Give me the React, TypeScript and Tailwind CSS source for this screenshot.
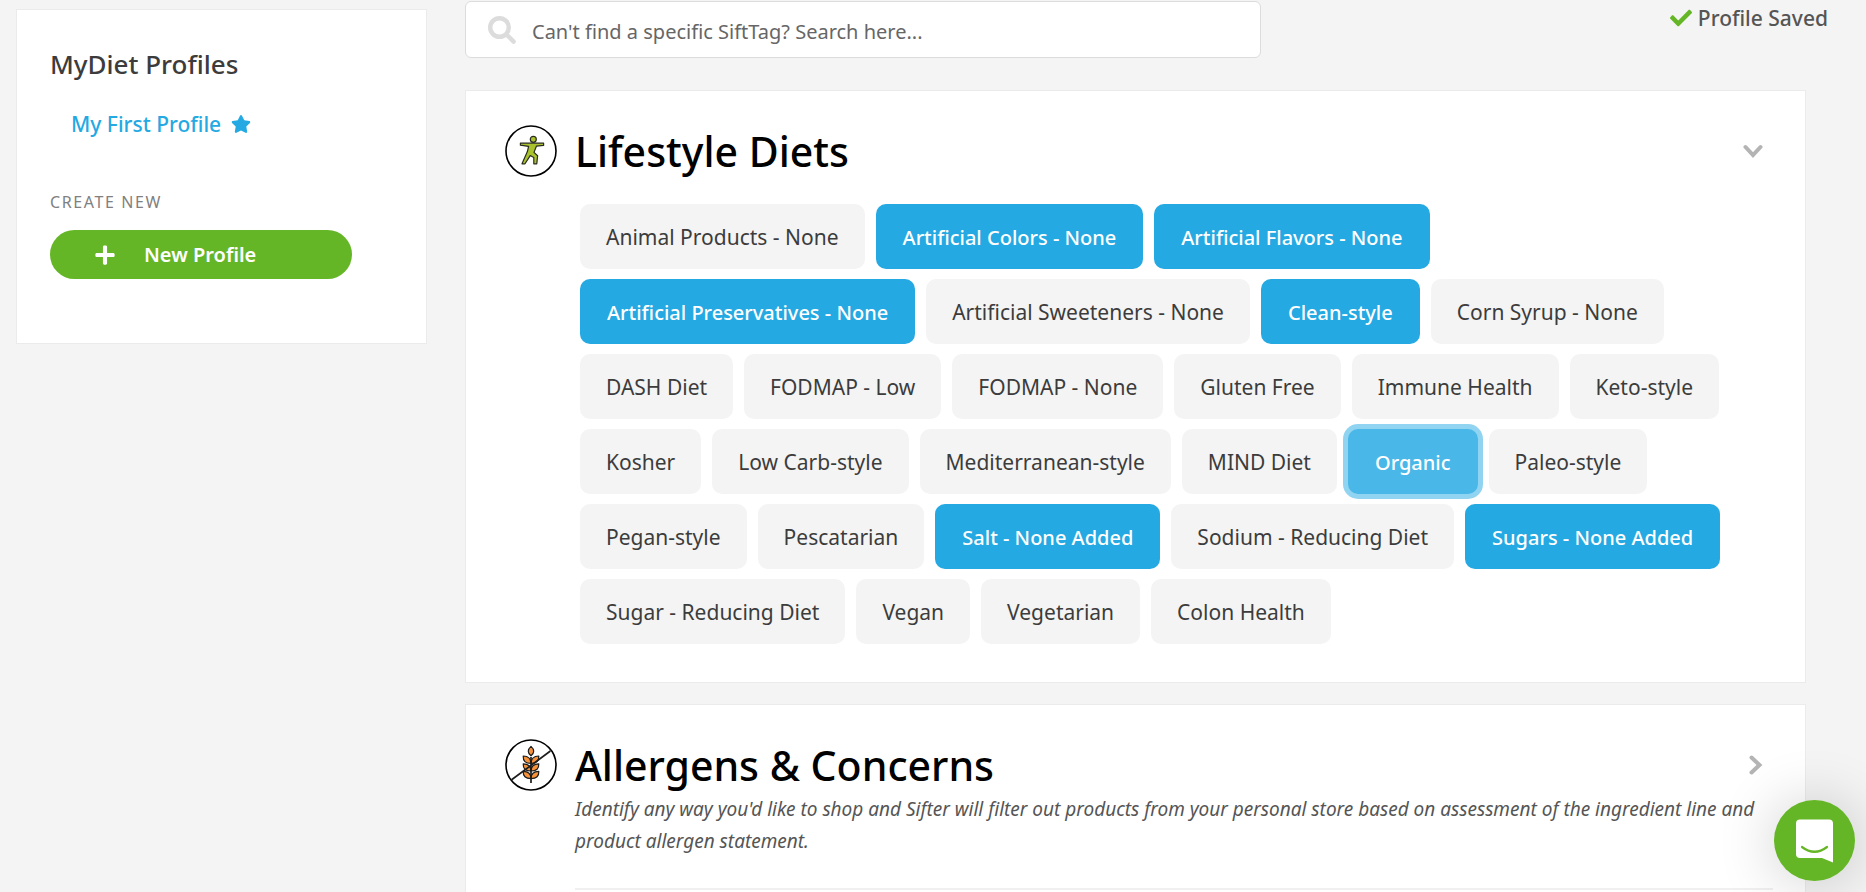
import { useState } from "react";
import clsx from "clsx";
import { FaCheck, FaPlus, FaStar } from "react-icons/fa";

interface Tag {
  name: string;
  selected?: boolean;
}

const lifestyleTags: Tag[] = [
  { name: "Animal Products - None" },
  { name: "Artificial Colors - None", selected: true },
  { name: "Artificial Flavors - None", selected: true },
  { name: "Artificial Preservatives - None", selected: true },
  { name: "Artificial Sweeteners - None" },
  { name: "Clean-style", selected: true },
  { name: "Corn Syrup - None" },
  { name: "DASH Diet" },
  { name: "FODMAP - Low" },
  { name: "FODMAP - None" },
  { name: "Gluten Free" },
  { name: "Immune Health" },
  { name: "Keto-style" },
  { name: "Kosher" },
  { name: "Low Carb-style" },
  { name: "Mediterranean-style" },
  { name: "MIND Diet" },
  { name: "Organic", selected: true },
  { name: "Paleo-style" },
  { name: "Pegan-style" },
  { name: "Pescatarian" },
  { name: "Salt - None Added", selected: true },
  { name: "Sodium - Reducing Diet" },
  { name: "Sugars - None Added", selected: true },
  { name: "Sugar - Reducing Diet" },
  { name: "Vegan" },
  { name: "Vegetarian" },
  { name: "Colon Health" },
];

const SearchIcon = () => (
  <svg viewBox="0 0 28 28" className="size-7 shrink-0" fill="none" stroke="#dcdcdc" aria-hidden="true">
    <circle cx="11.5" cy="11.5" r="9.3" strokeWidth="4.4" />
    <path d="M18.5 18.5 L25.6 25.6" strokeWidth="4.4" strokeLinecap="round" />
  </svg>
);

const LifestyleIcon = () => (
  <svg viewBox="0 0 52 52" className="size-[52px] shrink-0" aria-hidden="true">
    <circle cx="26" cy="26" r="25" fill="#fff" stroke="#000" strokeWidth="1.6" />
    <g fill="#a9c32f" stroke="#2b2b20" strokeWidth="1.2" strokeLinejoin="round">
      <path d="M15.4 18.2 H38.6 V20.4 L31.4 21.2 L29 27.4 L32.6 30.8 L31.8 38.8 H28.8 L28.8 32.6 L25.2 30.6 L20 38.8 H17 L22.4 26.6 L23.6 21.4 L15.4 20.2 Z" />
      <circle cx="28.3" cy="14.3" r="3" />
    </g>
  </svg>
);

const AllergenIcon = () => (
  <svg viewBox="0 0 52 52" className="size-[52px] shrink-0" aria-hidden="true">
    <circle cx="26" cy="26" r="25" fill="#fff" stroke="#000" strokeWidth="1.6" />
    <g fill="#f7923a" stroke="#1d1d1d" strokeWidth="1.2" strokeLinejoin="round">
      <path d="M26 7.4 C29.6 10.6 29.6 14 26 16.8 C22.4 14 22.4 10.6 26 7.4 Z" />
      <path d="M26 24.4 C20.4 24.4 18 22 18.2 17 C23.4 17.2 26 20 26 24.4 C26 20 28.6 17.2 33.8 17 C34 22 31.6 24.4 26 24.4 Z" />
      <path d="M26 32 C20.4 32 18 29.6 18.2 24.8 C23.4 25 26 27.6 26 32 C26 27.6 28.6 25 33.8 24.8 C34 29.6 31.6 32 26 32 Z" />
      <path d="M26 39.6 C20.4 39.6 18 37.2 18.2 32.4 C23.4 32.6 26 35.2 26 39.6 C26 35.2 28.6 32.6 33.8 32.4 C34 37.2 31.6 39.6 26 39.6 Z" />
    </g>
    <path d="M26 18 V44 M6.6 40.8 L45.4 12" fill="none" stroke="#1d1d1d" strokeWidth="1.7" />
  </svg>
);

const Chevron = ({ open }: { open: boolean }) => (
  <svg viewBox="0 0 20 20" className="size-5" fill="none" stroke="#b4b4b4" strokeWidth="4" aria-hidden="true">
    <path d={open ? "M2.5 6 L10 14 L17.5 6" : "M8.5 2.5 L16.5 10 L8.5 17.5"} strokeLinecap="round" />
  </svg>
);

const ChatIcon = () => (
  <svg viewBox="0 0 37 44" className="h-11 w-[37px]" aria-hidden="true">
    <path d="M4 0.5 H33 A4 4 0 0 1 37 4.5 V43.5 L26 39 H4 A4 4 0 0 1 0 35 V4.5 A4 4 0 0 1 4 0.5 Z" fill="#fff" />
    <path d="M6 28 Q18.5 37.5 31 28" fill="none" stroke="#65b626" strokeWidth="2.2" strokeLinecap="round" />
  </svg>
);

const Sidebar = () => (
  <aside className="mt-[9px] w-[411px] shrink-0 self-start border border-[#ebebeb] bg-white px-[33px] pt-9 pb-16">
    <h2 className="text-[26px] leading-9 font-medium text-[#3c3c3c]">MyDiet Profiles</h2>
    <a href="#profile" className="mt-[26px] ml-[21px] flex items-center gap-[10px] text-[21px] leading-8 font-medium text-[#24a9e2]">
      My First Profile
      <FaStar size={20} />
    </a>
    <p className="mt-[50px] text-base leading-6 tracking-widest text-[#808080]">CREATE NEW</p>
    <button
      type="button"
      className="mt-4 flex h-[49px] w-[302px] max-w-full items-center gap-7 rounded-full bg-[#65b626] px-11 text-[20px] font-semibold text-white"
    >
      <FaPlus size={22} />
      New Profile
    </button>
  </aside>
);

const TagButton = ({ tag, onToggle }: { tag: Tag; onToggle: () => void }) => (
  <button
    type="button"
    aria-pressed={!!tag.selected}
    onClick={onToggle}
    className={clsx(
      "h-[65px] rounded-[10px] pt-0.5",
      !tag.selected && "bg-[#f4f4f4] px-[26px] text-[21px] text-[#3c3c3c]",
      tag.selected && "px-[27px] text-[20px] font-medium text-white",
      tag.selected && (tag.name === "Organic" ? "bg-[#49b7e8] ring-[5px] ring-[#91d4f1]" : "bg-[#24a9e2]")
    )}
  >
    {tag.name}
  </button>
);

const App = () => {
  const [tags, setTags] = useState(lifestyleTags);

  const toggle = (name: string) => {
    setTags(tags.map((t) => (t.name === name ? { ...t, selected: !t.selected } : t)));
  };

  return (
    <div className="h-screen overflow-hidden bg-[#f4f4f4] font-['Noto_Sans',sans-serif]">
      <div className="flex gap-[38px] pl-4">
        <Sidebar />
        <main className="min-w-0 flex-1">
          <div className="flex items-start justify-between pr-[38px]">
            <label className="mt-px flex h-[57px] w-[796px] items-center gap-4 rounded-md border border-[#dcdcdc] bg-white px-[22px]">
              <SearchIcon />
              <input
                type="text"
                aria-label="Search SiftTags"
                placeholder="Can't find a specific SiftTag? Search here..."
                className="w-full bg-transparent pt-1 text-[20px] text-[#666] outline-none placeholder:text-[#666]"
              />
            </label>
            <p className="flex items-center gap-1.5 text-[21px] leading-9 font-medium text-[#555]">
              <FaCheck size={22} className="text-[#65b626]" />
              Profile Saved
            </p>
          </div>

          <div className="mt-8 mr-[60px] flex flex-col gap-[21px]">
            <section className="border border-[#ebebeb] bg-white pt-[34px] pr-8 pb-[38px] pl-[39px]">
              <header className="mr-[10px] flex items-center gap-[18px]">
                <LifestyleIcon />
                <h1 className="flex-1 text-[41px] leading-[52px] font-medium text-black">Lifestyle Diets</h1>
                <button type="button" aria-label="Collapse Lifestyle Diets">
                  <Chevron open />
                </button>
              </header>
              <div className="mt-[27px] mr-[10px] ml-[75px] flex flex-wrap gap-x-[11px] gap-y-[10px]">
                {tags.map((tag) => (
                  <TagButton key={tag.name} tag={tag} onToggle={() => toggle(tag.name)} />
                ))}
              </div>
            </section>

            <section className="border border-[#ebebeb] bg-white pt-[34px] pr-8 pb-[38px] pl-[39px]">
              <header className="mr-[10px] flex items-center gap-[18px]">
                <AllergenIcon />
                <h1 className="flex-1 text-[41px] leading-[52px] font-medium text-black">Allergens &amp; Concerns</h1>
                <button type="button" aria-label="Expand Allergens & Concerns">
                  <Chevron open={false} />
                </button>
              </header>
              <p className="mt-[2px] ml-[70px] text-[19px] leading-8 text-[#555] italic">
                Identify any way you'd like to shop and Sifter will filter out products from your personal store based on
                assessment of the ingredient line and product allergen statement.
              </p>
              <hr className="mt-[31px] ml-[70px] border-t-2 border-[#f0f0f0]" />
            </section>
          </div>
        </main>
      </div>

      <button
        type="button"
        aria-label="Open chat"
        className="fixed right-[11px] bottom-[11px] flex size-[81px] items-center justify-center rounded-full bg-[#65b626] shadow-[0_2px_60px_rgba(0,0,0,0.2)]"
      >
        <ChatIcon />
      </button>
    </div>
  );
};

export default App;
